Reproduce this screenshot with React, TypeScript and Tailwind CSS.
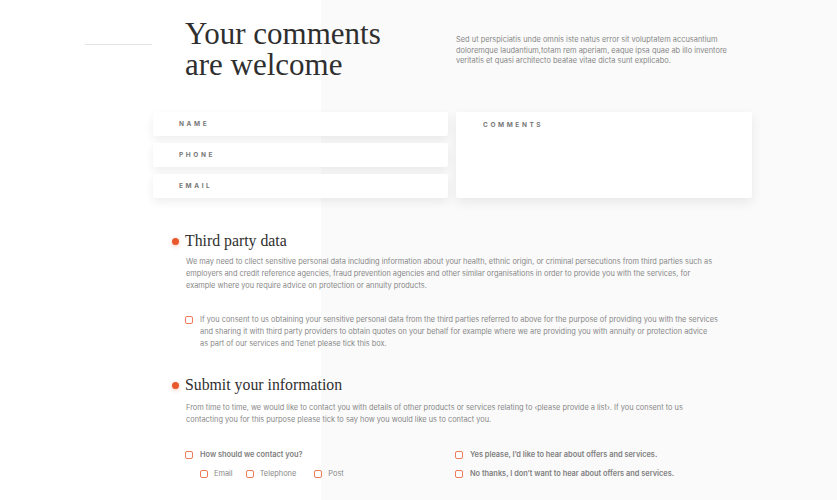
import React from 'react'

const serif = "font-['Liberation_Serif',serif]"

const Box: React.FC<{ className?: string }> = ({ className = '' }) => (
  <span className={`inline-block h-[8px] w-[8px] shrink-0 rounded-[2px] border border-[#ee7c5a] bg-white ${className}`} />
)

const Field: React.FC<{ label: string }> = ({ label }) => (
  <div className="flex h-[24px] items-center rounded-[2px] bg-white pl-[26px] pt-[1px] shadow-[0_4px_10px_rgba(0,0,0,0.07)]">
    <span className="text-[6.5px] font-bold tracking-[2.6px] text-[#777777]">{label}</span>
  </div>
)

const SectionTitle: React.FC<{ children: React.ReactNode }> = ({ children }) => (
  <div className="flex items-center">
    <span className="h-[7px] w-[7px] rounded-full bg-[#e9582a] shadow-[0_1px_4px_rgba(233,88,42,0.35)]" />
    <h2 className={`ml-[6px] text-[15.8px] leading-[20px] text-[#2f2f2f] ${serif}`}>{children}</h2>
  </div>
)

export default function App() {
  return (
    <div className="min-h-[500px] w-full bg-[linear-gradient(to_right,#ffffff_321px,#fafafa_321px)] font-['Inter',sans-serif] text-[#888888]">
      {/* intro */}
      <header className="flex pt-[18px]">
        <div className="ml-[85px] mt-[26px] h-px w-[67px] bg-[#e4e4e4]" />
        <h1 className={`ml-[33px] flex w-[271px] flex-col text-[31px] leading-[31px] text-[#2f2f2f] ${serif}`}>
          <span>Your comments</span>
          <span>are welcome</span>
        </h1>
        <p className="mt-[17px] w-[300px] text-[7.45px] leading-[10.7px]">
          Sed ut perspiciatis unde omnis iste natus error sit voluptatem accusantium
          <br />
          doloremque laudantium,totam rem aperiam, eaque ipsa quae ab illo inventore
          <br />
          veritatis et quasi architecto beatae vitae dicta sunt explicabo.
        </p>
      </header>

      {/* form */}
      <form className="ml-[153px] mt-[32px] grid w-[599px] grid-cols-[295px_296px] gap-x-[8px]">
        <div className="flex flex-col gap-[7px]">
          <Field label="NAME" />
          <Field label="PHONE" />
          <Field label="EMAIL" />
        </div>
        <div className="rounded-[2px] bg-white pl-[27px] pt-[9px] shadow-[0_4px_12px_rgba(0,0,0,0.08)]">
          <span className="block text-[6.5px] font-bold leading-[8px] tracking-[2.6px] text-[#777777]">COMMENTS</span>
        </div>
      </form>

      {/* third party */}
      <section className="ml-[172px] mt-[33px]">
        <SectionTitle>Third party data</SectionTitle>
        <p className="ml-[14px] mt-[5px] text-[7.4px] leading-[12px]">
          We may need to cllect sensitive personal data including information about your health, ethnic origin, or criminal persecutions from third parties such as
          <br />
          employers and credit reference agencies, fraud prevention agencies and other similar organisations in order to provide you with the services, for
          <br />
          example where you require advice on protection or annuity products.
        </p>
        <label className="ml-[13px] mt-[22px] flex gap-[7px]">
          <Box className="mt-[2px]" />
          <span className="text-[7.4px] leading-[12px]">
            If you consent to us obtaining your sensitive personal data from the third parties referred to above for the purpose of providing you with the services
            <br />
            and sharing it with third party providers to obtain quotes on your behalf for example where we are providing you with annuity or protection advice
            <br />
            as part of our services and Tenet please tick this box.
          </span>
        </label>
      </section>

      {/* submit */}
      <section className="ml-[172px] mt-[25px]">
        <SectionTitle>Submit your information</SectionTitle>
        <p className="ml-[14px] mt-[7px] text-[7.4px] leading-[12px]">
          From time to time, we would like to contact you with details of other products or services relating to ‹please provide a list›. If you consent to us
          <br />
          contacting you for this purpose please tick to say how you would like us to contact you.
        </p>
        <div className="ml-[13px] mt-[23px] grid grid-cols-[270px_1fr] text-[7.4px] leading-[12px]">
          <div className="flex flex-col gap-[7px]">
            <label className="flex items-center gap-[7px] font-semibold text-[#808080]">
              <Box />
              How should we contact you?
            </label>
            <div className="ml-[15px] flex items-center">
              <label className="flex items-center gap-[6px]">
                <Box />
                Email
              </label>
              <label className="ml-[13px] flex items-center gap-[6px]">
                <Box />
                Telephone
              </label>
              <label className="ml-[18px] flex items-center gap-[6px]">
                <Box />
                Post
              </label>
            </div>
          </div>
          <div className="flex flex-col gap-[7px] font-semibold text-[#808080]">
            <label className="flex items-center gap-[7px]">
              <Box />
              Yes please, I’d like to hear about offers and services.
            </label>
            <label className="flex items-center gap-[7px]">
              <Box />
              No thanks, I don’t want to hear about offers and services.
            </label>
          </div>
        </div>
      </section>
    </div>
  )
}
